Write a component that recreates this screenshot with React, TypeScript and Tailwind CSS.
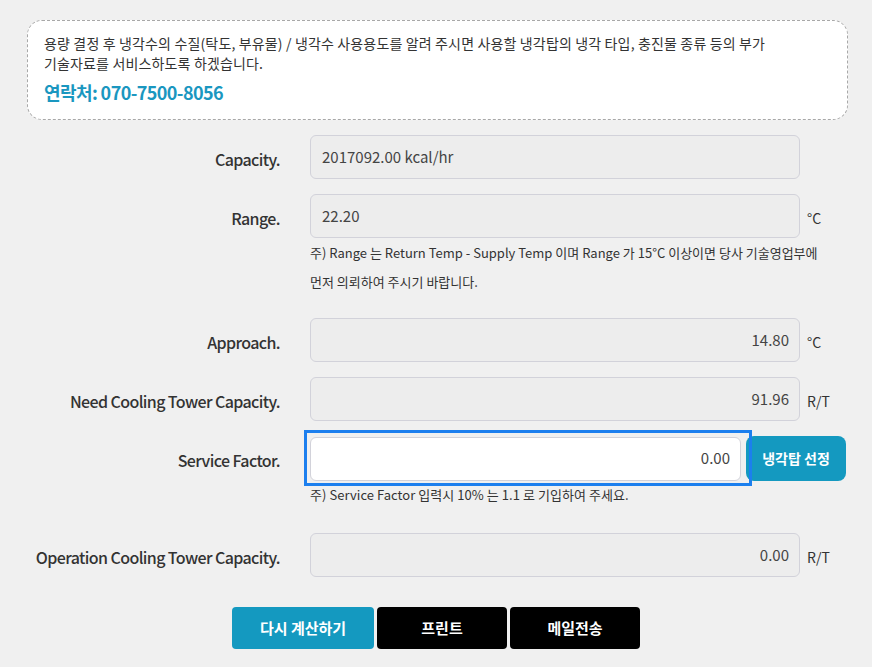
import React from "react";

const font = { fontFamily: '"Noto Sans CJK KR", "Noto Sans", sans-serif' };

type RowProps = {
  label: string;
  value: string;
  unit?: string;
  align?: "left" | "right";
  className?: string;
};

const ReadonlyRow: React.FC<RowProps> = ({ label, value, unit, align = "right", className = "" }) => {
  return (
    <div className={`flex flex-row items-center ${className}`}>
      <div className="w-[280px] text-right text-[16px] font-medium text-[#333] tracking-[-0.6px] pt-[3px]">{label}</div>
      <div
        className={`ml-[30px] w-[490px] h-[44px] rounded-[6px] border border-[#d2d2da] bg-[#ededed] flex items-center text-[15px] text-[#444] ${
          align === "left" ? "justify-start pl-[11px]" : "justify-end pr-[10px]"
        }`}
      >
        {value}
      </div>
      {unit && <div className="ml-[7px] text-[14px] text-[#333] pt-[4px]">{unit}</div>}
    </div>
  );
};

const App: React.FC = () => {
  return (
    <div style={font} className="w-[872px] h-[670px] bg-white overflow-hidden">
      <div className="h-[667px] bg-[#f0f0f0] pt-[20px]">
        <div className="ml-[27px] w-[821px] h-[100px] rounded-[15px] border border-dashed border-[#a8a8a8] bg-white pl-[16px] pt-[12px]">
          <p className="text-[14px] leading-[20px] text-[#333] whitespace-nowrap tracking-[0.15px]">
            용량 결정 후 냉각수의 수질(탁도, 부유물) / 냉각수 사용용도를 알려 주시면 사용할 냉각탑의 냉각 타입, 충진물 종류 등의 부가
            <br />
            기술자료를 서비스하도록 하겠습니다.
          </p>
          <p className="mt-[8px] text-[18px] leading-[22px] font-bold text-[#1a97c0] tracking-[-0.6px]">연락처: 070-7500-8056</p>
        </div>

        <ReadonlyRow className="mt-[15px]" label="Capacity." value="2017092.00 kcal/hr" align="left" />
        <ReadonlyRow className="mt-[15px]" label="Range." value="22.20" unit="°C" align="left" />
        <p className="ml-[310px] text-[13px] leading-[29px] text-[#333] whitespace-nowrap">
          주) Range 는 Return Temp - Supply Temp 이며 Range 가 15°C 이상이면 당사 기술영업부에
          <br />
          먼저 의뢰하여 주시기 바랍니다.
        </p>

        <ReadonlyRow className="mt-[22px]" label="Approach." value="14.80" unit="°C" />
        <ReadonlyRow className="mt-[15px]" label="Need Cooling Tower Capacity." value="91.96" unit="R/T" />

        <div className="mt-[15px] flex flex-row items-center">
          <div className="w-[280px] text-right text-[16px] font-medium text-[#333] tracking-[-0.6px] pt-[3px]">Service Factor.</div>
          <div className="ml-[30px] relative">
            <div className="w-[431px] h-[44px] rounded-[6px] border border-[#d2d2da] bg-white flex items-center justify-end pr-[10px] text-[15px] text-[#444]">
              0.00
            </div>
            <div className="absolute -left-[6px] -top-[7px] -right-[11px] -bottom-[5px] border-[3px] border-[#1c7fee] pointer-events-none z-10"></div>
          </div>
          <button className="ml-[5px] w-[100px] h-[45px] rounded-[8px] bg-[#1499c0] text-white text-[14px] font-bold">냉각탑 선정</button>
        </div>
        <p className="ml-[310px] text-[13px] leading-[28px] text-[#333] whitespace-nowrap tracking-[0.05px]">
          주) Service Factor 입력시 10% 는 1.1 로 기입하여 주세요.
        </p>

        <ReadonlyRow className="mt-[24px]" label="Operation Cooling Tower Capacity." value="0.00" unit="R/T" />

        <div className="mt-[30px] flex flex-row justify-center gap-[3px]">
          <button className="w-[142px] h-[42px] rounded-[4px] bg-[#1499c0] text-white text-[15px] font-bold">다시 계산하기</button>
          <button className="w-[130px] h-[42px] rounded-[4px] bg-black text-white text-[15px] font-bold">프린트</button>
          <button className="w-[130px] h-[42px] rounded-[4px] bg-black text-white text-[15px] font-bold">메일전송</button>
        </div>
      </div>
    </div>
  );
};

export default App;
